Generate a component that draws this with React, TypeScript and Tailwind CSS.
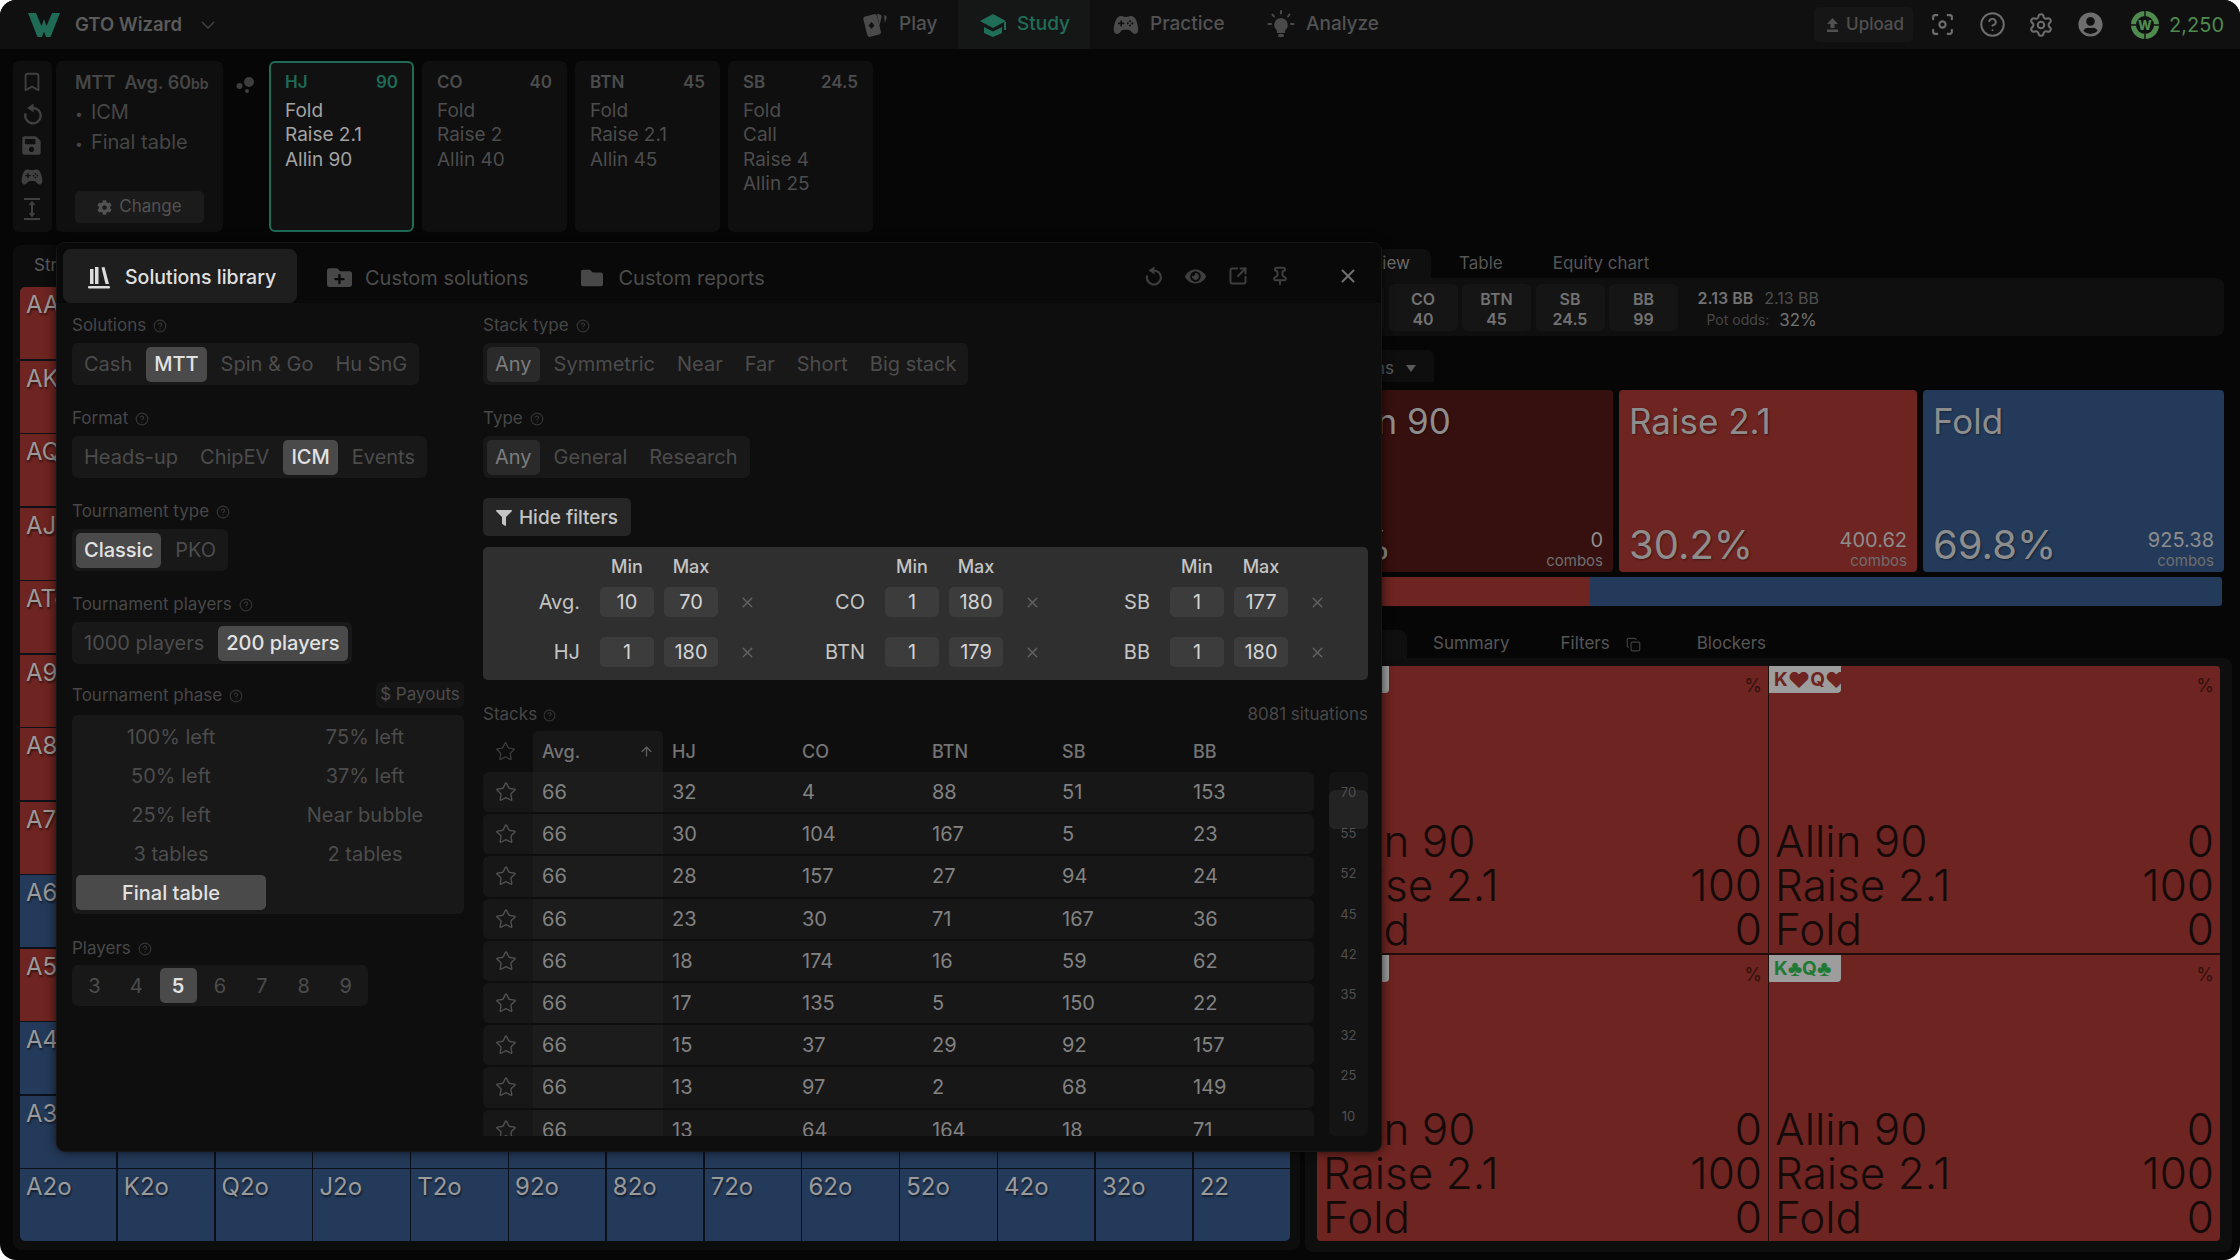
import { ArrowUp, Bookmark, CircleHelp, Copy, Focus, Pin, Settings, SquareArrowOutUpRight, Star, X } from "lucide-react";
import { FaCog, FaEye, FaFilter, FaFolder, FaFolderPlus, FaSave, FaUserCircle } from "react-icons/fa";
import { IoGameController } from "react-icons/io5";

const RANKS = ["A", "K", "Q", "J", "T", "9", "8", "7", "6", "5", "4", "3", "2"];
const RED_HANDS = ["AA", "AKo", "AQo", "AJo", "ATo", "A9o", "A8o", "A7o", "A5o"];

const SCENARIO = [
  { pos: "CO", stack: "40", lines: ["Fold", "Raise 2", "Allin 40"] },
  { pos: "BTN", stack: "45", lines: ["Fold", "Raise 2.1", "Allin 45"] },
  { pos: "SB", stack: "24.5", lines: ["Fold", "Call", "Raise 4", "Allin 25"] },
];

const FILTERS = [
  [
    { label: "Avg.", min: "10", max: "70" },
    { label: "HJ", min: "1", max: "180" },
  ],
  [
    { label: "CO", min: "1", max: "180" },
    { label: "BTN", min: "1", max: "179" },
  ],
  [
    { label: "SB", min: "1", max: "177" },
    { label: "BB", min: "1", max: "180" },
  ],
];

const STACKS = [
  [32, 4, 88, 51, 153],
  [30, 104, 167, 5, 23],
  [28, 157, 27, 94, 24],
  [23, 30, 71, 167, 36],
  [18, 174, 16, 59, 62],
  [17, 135, 5, 150, 22],
  [15, 37, 29, 92, 157],
  [13, 97, 2, 68, 149],
  [13, 64, 164, 18, 71],
];

const PHASES = ["100% left", "75% left", "50% left", "37% left", "25% left", "Near bubble", "3 tables", "2 tables", "Final table"];

function handLabel(row: number, col: number) {
  if (row === col) return RANKS[row] + RANKS[col];
  if (row < col) return RANKS[row] + RANKS[col] + "s";
  return RANKS[col] + RANKS[row] + "o";
}

function Logo() {
  return (
    <svg width="32" height="25" viewBox="0 0 32 25" className="shrink-0">
      <path d="M0 1H8L13.5 14 16 7 18.5 14 24 1H32L22.5 25H18L16 19.5 14 25H9.500Z" fill="#1f6b55" />
    </svg>
  );
}

function CardsIcon() {
  return (
    <svg width="27" height="28" viewBox="0 0 27 28" className="shrink-0">
      <rect x="3" y="4" width="14" height="21" rx="2.500" transform="rotate(-14 10 14)" fill="#4a4a4a" />
      <path d="M9.500 11l3 3.500-3 3.500-3-3.500z" fill="#101010" />
      <path d="M15 3l3 .5q2 .5 1.500 2.500l-2 9z" fill="#4a4a4a" />
      <path d="M22 4q3 .5 2.500 3l-1.500 5z" fill="#4a4a4a" />
    </svg>
  );
}

function StudyIcon() {
  return (
    <svg width="28" height="26" viewBox="0 0 28 26" className="shrink-0" fill="#216e58">
      <path d="M14 2 27 9 14 16 1 9Z" />
      <path d="M5 15v6l9 4 9-4v-6l-9 4.500Z" />
      <rect x="25" y="10" width="2" height="8" />
    </svg>
  );
}

function BulbIcon() {
  return (
    <svg width="28" height="30" viewBox="0 0 28 30" className="shrink-0" stroke="#4a4a4a" strokeWidth="2" strokeLinecap="round">
      <path d="M14 8a7 7 0 0 0-4 12.500V23h8v-2.500A7 7 0 0 0 14 8Z" fill="#4a4a4a" stroke="none" />
      <rect x="11" y="24" width="6" height="3" rx="1.500" fill="#4a4a4a" stroke="none" />
      <path d="M14 1v2.500M5.500 4.500 7 6.500M22.500 4.500 21 6.500M1.500 14H4M24 14h2.500" />
    </svg>
  );
}

function CursorIcon() {
  return (
    <svg width="18" height="22" viewBox="0 0 18 22" fill="none" stroke="#404040" strokeWidth="2">
      <path d="M1 1h16M1 21h16M9 5v12" />
      <path d="M6.500 7 9 4l2.500 3M6.500 15 9 18l2.500-3" strokeWidth="1.500" />
    </svg>
  );
}

function NodesIcon() {
  return (
    <svg width="20" height="20" viewBox="0 0 20 20" fill="#3e3e3e">
      <circle cx="13" cy="7" r="5" />
      <circle cx="3.500" cy="11" r="3" />
      <circle cx="11" cy="16" r="2" />
    </svg>
  );
}

function UploadIcon() {
  return (
    <svg width="11" height="14" viewBox="0 0 11 14" fill="#505050">
      <path d="M5.500 0 11 6H7.500v4h-4V6H0ZM0 11.500h11V14H0Z" />
    </svg>
  );
}

function RefreshIcon({ size }: { size: number }) {
  return (
    <svg width={size} height={size} viewBox="0 0 20 20" className="shrink-0">
      <path d="M11 4.500a7 7 0 1 1-6.800 5" fill="none" stroke="currentColor" strokeWidth="2.200" />
      <path d="M11.500 0.500v8L5.500 4.500Z" fill="currentColor" />
    </svg>
  );
}

function CoinIcon() {
  return (
    <svg width="28" height="28" viewBox="0 0 28 28" className="shrink-0">
      <circle cx="14" cy="14" r="14" fill="#4f8a4f" />
      <circle cx="14" cy="14" r="9" fill="#101010" />
      <text x="14" y="19" textAnchor="middle" fontSize="13" fontWeight="800" fill="#4f8a4f" fontFamily="Inter, sans-serif">
        W
      </text>
      <path d="M14 0v5M14 23v5M0 14h5M23 14h5" stroke="#101010" strokeWidth="1.500" />
    </svg>
  );
}

function BooksIcon() {
  return (
    <svg width="24" height="24" viewBox="0 0 24 24" fill="#dcdcdc" className="shrink-0">
      <rect x="3" y="3" width="3.500" height="15" />
      <rect x="8" y="1" width="3.500" height="17" />
      <path d="M14.500 1.500 17.500 1 22 18h-3.500Z" />
      <rect x="1" y="20" width="22" height="2.500" rx="1" />
    </svg>
  );
}

function TopBar() {
  return (
    <div className="flex h-[49px] items-center bg-[#101010]">
      <div className="flex w-[862px] items-center pl-[28px]">
        <Logo />
        <span className="ml-[15px] text-[18.500px] font-semibold text-[#5b5b5b]">GTO Wizard</span>
        <svg width="14" height="8" viewBox="0 0 14 8" fill="none" stroke="#404040" strokeWidth="1.500" className="ml-[19px]">
          <path d="M1 1l6 6 6-6" />
        </svg>
      </div>
      <div className="flex h-full items-center text-[19px] font-medium text-[#525252]">
        <div className="flex w-[96px] items-center gap-[10px]">
          <CardsIcon />
          Play
        </div>
        <div className="flex h-full w-[132px] items-center gap-[10px] bg-[#151717] pl-[21px] text-[#216e58]">
          <StudyIcon />
          Study
        </div>
        <div className="flex w-[177px] items-center gap-[11px] pl-[23px]">
          <IoGameController size={26} className="shrink-0 text-[#4a4a4a]" />
          Practice
        </div>
        <div className="flex items-center gap-[11px]">
          <BulbIcon />
          Analyze
        </div>
      </div>
      <div className="ml-auto flex items-center pr-[16px]">
        <div className="flex h-[35px] w-[99px] items-center gap-[8px] rounded-[5px] bg-[#161616] pl-[13px] text-[17px] font-medium text-[#505050]">
          <UploadIcon />
          Upload
        </div>
        <Focus size={25} className="ml-[17px] text-[#6e6e6e]" />
        <CircleHelp size={27} strokeWidth={1.7} className="ml-[24px] text-[#6e6e6e]" />
        <Settings size={26} strokeWidth={1.9} className="ml-[22px] text-[#6e6e6e]" />
        <FaUserCircle size={25} className="ml-[24px] text-[#6e6e6e]" />
        <div className="ml-[28px] flex items-center gap-[10px] text-[20px] text-[#4f8a4f]">
          <CoinIcon />
          2,250
        </div>
      </div>
    </div>
  );
}

function ScenarioRow() {
  return (
    <div className="mt-[12px] flex h-[171px] pl-[13px]">
      <div className="flex w-[39px] flex-col items-center gap-[10px] rounded-[6px] bg-[#0f0f0f] pr-[2px] pt-[10px] text-[#404040]">
        <Bookmark size={22} strokeWidth={2} />
        <RefreshIcon size={22} />
        <FaSave size={21} />
        <IoGameController size={22} />
        <CursorIcon />
      </div>
      <div className="ml-[4px] flex w-[167px] flex-col rounded-[6px] bg-[#0f0f0f] pl-[19px] pt-[11px]">
        <div className="text-[18px] font-semibold leading-[22px] text-[#464646]">
          MTT&nbsp; Avg. 60<span className="text-[14px]">bb</span>
        </div>
        <div className="mt-[3px] text-[20px] leading-[29px] text-[#464646]">
          <div>
            <span className="mr-[8px] text-[14px]">•</span>ICM
          </div>
          <div>
            <span className="mr-[8px] text-[14px]">•</span>Final table
          </div>
        </div>
        <div className="mb-[9px] mt-auto flex h-[32px] w-[129px] items-center justify-center gap-[7px] rounded-[5px] bg-[#1b1b1b] text-[17px] text-[#525252]">
          <FaCog size={15} />
          Change
        </div>
      </div>
      <div className="flex w-[46px] justify-center pt-[14px]">
        <NodesIcon />
      </div>
      <div className="w-[145px] rounded-[6px] border-2 border-[#1f6b55] bg-[#111111] px-[14px] pt-[7px] text-[19px] leading-[24.500px] text-[#a3a3a3]">
        <div className="mb-[4px] flex justify-between text-[17px] font-semibold text-[#1f6b55]">
          <span>HJ</span>
          <span>90</span>
        </div>
        <div>Fold</div>
        <div>Raise 2.1</div>
        <div>Allin 90</div>
      </div>
      {SCENARIO.map((card) => (
        <div key={card.pos} className="ml-[8px] w-[145px] rounded-[6px] bg-[#0f0f0f] px-[15px] pt-[9px] text-[19px] leading-[24.500px] text-[#4c4c4c]">
          <div className="mb-[4px] flex justify-between text-[17px] font-semibold">
            <span>{card.pos}</span>
            <span>{card.stack}</span>
          </div>
          {card.lines.map((line) => (
            <div key={line}>{line}</div>
          ))}
        </div>
      ))}
    </div>
  );
}

function HandGrid() {
  return (
    <div className="h-[1005px] w-[1287px] rounded-[8px] bg-[#0d0d0d] pl-[7px] pr-[10px]">
      <div className="flex h-[42px] items-center pl-[14px] text-[17px] text-[#5a5a5a]">Strategy</div>
      <div className="grid h-[954px] grid-cols-[repeat(13,minmax(0,1fr))] grid-rows-[repeat(13,minmax(0,1fr))] gap-[1.500px] overflow-hidden rounded-[5px] bg-[#0c1018]">
        {RANKS.map((_, row) =>
          RANKS.map((_, col) => {
            const hand = handLabel(row, col);
            // the library modal covers everything but the first column and the last row
            const visible = col === 0 || row === 12;
            return (
              <div
                key={hand}
                className={`pl-[6px] text-[24px] text-[#9a9a9a] [text-shadow:1px_2px_2px_rgba(0,0,0,0.5)] ${RED_HANDS.includes(hand) ? "bg-[#6e2420]" : "bg-[#243a5a]"}`}
              >
                {visible ? hand : null}
              </div>
            );
          }),
        )}
      </div>
    </div>
  );
}

function ActionCard({ title, pct, combos, bg, width }: { title: string; pct: string; combos: string; bg: string; width: string }) {
  return (
    <div className={`flex h-[182px] flex-col justify-between rounded-[4px] px-[10px] pb-[1px] pt-[9px] text-[#8d8d8d] ${bg} ${width}`}>
      <div className="text-[35px] leading-[44px] [text-shadow:1px_1px_2px_rgba(0,0,0,0.4)]">{title}</div>
      <div className="flex items-end justify-between">
        <span className="mb-[3px] text-[40px] leading-[46px] [text-shadow:1px_1px_2px_rgba(0,0,0,0.4)]">{pct}</span>
        <div className="text-right">
          <div className="text-[20px] leading-[22px]">{combos}</div>
          <div className="text-[15px] leading-[20px] text-[#6e6e6e]">combos</div>
        </div>
      </div>
    </div>
  );
}

function ComboCell({ first, second, suit, color }: { first: string; second: string; suit: string; color: string }) {
  return (
    <div className="flex flex-col justify-between bg-[#6e2420] pb-[2px] pr-[6px] text-[#140a0a]">
      <div className="flex items-start justify-between">
        <div className={`flex h-[27px] w-[72px] items-center rounded-br-[4px] bg-[#9d9d9d] pl-[5px] text-[19px] font-bold leading-none ${color}`}>
          {first}
          <span className="text-[22px]">{suit}</span>
          {second}
          <span className="text-[22px]">{suit}</span>
        </div>
        <span className="pt-[10px] text-[18px] leading-[20px] text-[#30110f]">%</span>
      </div>
      <div className="pl-[6px] text-[44px] font-light leading-[44px]">
        <div className="flex justify-between">
          <span>Allin 90</span>
          <span>0</span>
        </div>
        <div className="flex justify-between">
          <span>Raise 2.1</span>
          <span>100</span>
        </div>
        <div className="flex justify-between">
          <span>Fold</span>
          <span>0</span>
        </div>
      </div>
    </div>
  );
}

function RightPanel() {
  return (
    <div className="ml-[5px] flex w-[927px] flex-col">
      <div className="flex h-[33px] items-center pl-[15px] pt-[4px] text-[17px] text-[#565656]">
        <div className="flex h-full w-[111px] items-center justify-end rounded-t-[8px] bg-[#0f0f0f] pr-[21px] text-[#6a6a6a]">Overview</div>
        <span className="ml-[28px]">Table</span>
        <span className="ml-[50px]">Equity chart</span>
      </div>
      <div className="flex h-[58px] w-[919px] items-center rounded-[8px] bg-[#0f0f0f] pl-[10px] text-[16px] font-semibold text-[#727272]">
        {[
          ["", ""],
          ["CO", "40"],
          ["BTN", "45"],
          ["SB", "24.5"],
          ["BB", "99"],
        ].map(([pos, stack]) => (
          <div key={pos} className="mr-[4.500px] flex h-[47px] w-[69px] flex-col items-center justify-center rounded-[6px] bg-[#151515] pt-[3px] leading-[20px]">
            <span>{pos}</span>
            <span>{stack}</span>
          </div>
        ))}
        <div className="ml-[15px] pt-[4px]">
          <div className="flex gap-[11px] leading-[22px]">
            <span>2.13 BB</span>
            <span className="font-normal text-[#505050]">2.13 BB</span>
          </div>
          <div className="flex items-center pl-[9px] leading-[22px]">
            <span className="text-[14px] font-normal text-[#474747]">Pot odds:</span>
            <span className="ml-[10px] text-[17px] font-normal">32%</span>
          </div>
        </div>
      </div>
      <div className="mt-[14px] flex h-[32px] w-[129px] items-center justify-end gap-[12px] rounded-t-[6px] bg-[#0e0e0e] pr-[18px] pt-[5px] text-[17px] text-[#5a5a5a]">
        Actions
        <svg width="10" height="7" viewBox="0 0 10 7" fill="#5a5a5a">
          <path d="M0 0h10L5 7Z" />
        </svg>
      </div>
      <div className="mt-[8px] flex gap-[6px] pl-[12px]">
        <ActionCard title="Allin 90" pct="0%" combos="0" bg="bg-[#36100e]" width="w-[296px]" />
        <ActionCard title="Raise 2.1" pct="30.2%" combos="400.62" bg="bg-[#6e2420]" width="w-[298px]" />
        <ActionCard title="Fold" pct="69.8%" combos="925.38" bg="bg-[#243a5a]" width="w-[301px]" />
      </div>
      <div className="ml-[12px] mt-[5px] flex h-[29px] w-[905px] overflow-hidden rounded-[3px]">
        <div className="w-[273px] bg-[#6e2420]" />
        <div className="flex-1 bg-[#243a5a]" />
      </div>
      <div className="mt-[18px] flex h-[34px] items-center pl-[15px] pt-[6px] text-[17px] text-[#565656]">
        <div className="flex h-full w-[87px] items-center justify-end rounded-t-[8px] bg-[#0f0f0f]" />
        <span className="ml-[26px]">Summary</span>
        <span className="ml-[51px]">Filters</span>
        <Copy size={15} className="ml-[16px] text-[#3e3e3e]" />
        <span className="ml-[56px]">Blockers</span>
      </div>
      <div className="h-[594px] w-[927px] rounded-[8px] bg-[#0e0e0e] pl-[12px] pt-[8px]">
        <div className="grid h-[575px] w-[903px] grid-cols-2 grid-rows-2 gap-x-[1px] gap-y-[2px] overflow-hidden rounded-[4px] bg-[#200e0c]">
          <ComboCell first="K" second="Q" suit="♠" color="text-[#141414]" />
          <ComboCell first="K" second="Q" suit="♥" color="text-[#6e2420]" />
          <ComboCell first="K" second="Q" suit="♦" color="text-[#243a5a]" />
          <ComboCell first="K" second="Q" suit="♣" color="text-[#1f7a35]" />
        </div>
      </div>
    </div>
  );
}

function Label({ text }: { text: string }) {
  return (
    <div className="flex h-[22px] items-center pt-[2px] text-[17px] text-[#474747]">
      {text}
      <CircleHelp size={14} className="ml-[7px] text-[#343434]" />
    </div>
  );
}

function Segments({ items, active, dim }: { items: string[]; active: string; dim?: boolean }) {
  return (
    <div className="mt-[7px] flex h-[42px] w-fit items-center gap-[6px] rounded-[6px] bg-[#181818] px-[4px]">
      {items.map((item) => (
        <div
          key={item}
          className={`flex h-[35px] items-center rounded-[5px] px-[8px] text-[20px] ${
            item !== active ? "text-[#4c4c4c]" : dim ? "bg-[#2a2a2a] text-[#7c7c7c]" : "bg-[#4a4a4a] font-medium text-[#e2e2e2]"
          }`}
        >
          {item}
        </div>
      ))}
    </div>
  );
}

function FilterRow({ label, min, max }: { label: string; min: string; max: string }) {
  return (
    <div className="grid h-[30px] grid-cols-[107px_54px_54px_40px] gap-x-[10px]">
      <span className="flex items-center justify-end pr-[10px] text-[20px]">{label}</span>
      <span className="flex items-center justify-center rounded-[5px] bg-[#3c3c3c] text-[20px] text-[#d4d4d4]">{min}</span>
      <span className="flex items-center justify-center rounded-[5px] bg-[#3c3c3c] text-[20px] text-[#d4d4d4]">{max}</span>
      <span className="flex items-center pl-[11px]">
        <X size={17} className="text-[#626262]" />
      </span>
    </div>
  );
}

function FilterColumn({ rows }: { rows: { label: string; min: string; max: string }[] }) {
  return (
    <div className="flex w-[285px] flex-col text-[#c4c4c4]">
      <div className="grid h-[22px] grid-cols-[107px_54px_54px_40px] gap-x-[10px] pb-[6px] text-center text-[18px] font-medium leading-[16px]">
        <span />
        <span>Min</span>
        <span>Max</span>
      </div>
      <div className="mt-[6px]">
        <FilterRow {...rows[0]} />
      </div>
      <div className="mt-[20px]">
        <FilterRow {...rows[1]} />
      </div>
    </div>
  );
}

function LeftFilters() {
  return (
    <div className="w-[426px] pl-[15px] pt-[11px]">
      <Label text="Solutions" />
      <Segments items={["Cash", "MTT", "Spin & Go", "Hu SnG"]} active="MTT" />
      <div className="mt-[22px]">
        <Label text="Format" />
        <Segments items={["Heads-up", "ChipEV", "ICM", "Events"]} active="ICM" />
      </div>
      <div className="mt-[22px]">
        <Label text="Tournament type" />
        <Segments items={["Classic", "PKO"]} active="Classic" />
      </div>
      <div className="mt-[22px]">
        <Label text="Tournament players" />
        <Segments items={["1000 players", "200 players"]} active="200 players" />
      </div>
      <div className="mt-[18px] flex w-[392px] items-center justify-between">
        <Label text="Tournament phase" />
        <div className="flex h-[26px] w-[88px] items-center justify-center rounded-[5px] bg-[#151515] text-[17px] text-[#4c4c4c]">$ Payouts</div>
      </div>
      <div className="mt-[7px] grid w-[392px] grid-cols-2 gap-x-[4px] gap-y-[4px] rounded-[6px] bg-[#181818] p-[4px]">
        {PHASES.map((phase) => (
          <div
            key={phase}
            className={`flex h-[35px] items-center justify-center rounded-[5px] text-[20px] ${phase === "Final table" ? "bg-[#4a4a4a] font-medium text-[#e2e2e2]" : "text-[#4c4c4c]"}`}
          >
            {phase}
          </div>
        ))}
      </div>
      <div className="mt-[23px]">
        <Label text="Players" />
        <div className="mt-[6px] flex h-[41px] w-[296px] items-center gap-[5px] rounded-[6px] bg-[#181818] px-[4px]">
          {["3", "4", "5", "6", "7", "8", "9"].map((n) => (
            <div key={n} className={`flex h-[35px] w-[37px] items-center justify-center rounded-[5px] text-[20px] ${n === "5" ? "bg-[#4a4a4a] font-semibold text-[#e2e2e2]" : "text-[#4c4c4c]"}`}>
              {n}
            </div>
          ))}
        </div>
      </div>
    </div>
  );
}

function StacksTable() {
  return (
    <div className="mt-[24px]">
      <div className="flex h-[22px] items-center justify-between text-[17px] text-[#474747]">
        <span className="flex items-center">
          Stacks
          <CircleHelp size={13} className="ml-[6px] text-[#343434]" />
        </span>
        <span>8081 situations</span>
      </div>
      <div className="mt-[5px] grid h-[41px] w-[831px] grid-cols-[50px_130px_130px_130px_130px_131px_130px] items-center text-[18px] font-medium text-[#747474]">
        <Star size={21} strokeWidth={1.500} className="ml-[12px] text-[#3c3c3c]" />
        <div className="flex h-full items-center justify-between rounded-t-[5px] bg-[#171717] pl-[9px] pr-[9px]">
          Avg.
          <ArrowUp size={15} className="text-[#646464]" />
        </div>
        {["HJ", "CO", "BTN", "SB", "BB"].map((col) => (
          <span key={col} className="pl-[9px]">
            {col}
          </span>
        ))}
      </div>
      <div className="flex h-[364px] gap-[15px]">
        <div className="w-[831px] overflow-hidden">
          {STACKS.map((row, i) => (
            <div key={i} className="mb-[2px] grid h-[40.200px] grid-cols-[50px_130px_130px_130px_130px_131px_130px] items-center overflow-hidden rounded-[6px] bg-[#171717] text-[20px] text-[#828282]">
              <Star size={22} strokeWidth={1.500} className="ml-[12px] text-[#505050]" />
              <span className="flex h-full items-center bg-[#1c1c1c] pl-[9px]">66</span>
              {row.map((value, j) => (
                <span key={j} className="pl-[9px]">
                  {value}
                </span>
              ))}
            </div>
          ))}
        </div>
        <div className="relative w-[39px] rounded-[6px] bg-[#141414] pt-[1px]">
          <div className="absolute left-0 top-[18px] h-[39px] w-full rounded-[6px] bg-[#232323]" />
          {["70", "55", "52", "45", "42", "35", "32", "25", "10"].map((n) => (
            <div key={n} className="relative flex h-[40.400px] items-center justify-center text-[13px] text-[#505050]">
              {n}
            </div>
          ))}
        </div>
      </div>
    </div>
  );
}

function RightFilters() {
  return (
    <div className="w-[885px] pt-[11px]">
      <Label text="Stack type" />
      <Segments items={["Any", "Symmetric", "Near", "Far", "Short", "Big stack"]} active="Any" dim />
      <div className="mt-[22px]">
        <Label text="Type" />
        <Segments items={["Any", "General", "Research"]} active="Any" dim />
      </div>
      <div className="mt-[20px] flex h-[38px] w-[148px] items-center justify-center gap-[7px] rounded-[5px] bg-[#262626] pt-[2px] text-[19px] font-medium text-[#c4c4c4]">
        <FaFilter size={16} />
        Hide filters
      </div>
      <div className="mt-[11px] flex h-[133px] rounded-[5px] bg-[#2f2f2f] pt-[12px]">
        {FILTERS.map((rows) => (
          <FilterColumn key={rows[0].label} rows={rows} />
        ))}
      </div>
      <StacksTable />
    </div>
  );
}

function LibraryModal() {
  return (
    <div className="absolute left-[57px] top-[243px] h-[908px] w-[1324px] overflow-hidden rounded-[8px] bg-[#0e0e0e] shadow-[0_0_12px_rgba(0,0,0,0.8)] ring-1 ring-[#171717]">
      <div className="flex h-[60px] items-end bg-[#090909] pl-[6px] text-[20px] text-[#4c4c4c]">
        <div className="flex h-[54px] w-[234px] items-center gap-[14px] rounded-[8px] bg-[#1e1e1e] pl-[24px] pt-[3px] text-[19.500px] font-medium text-[#e0e0e0]">
          <BooksIcon />
          Solutions library
        </div>
        <div className="flex h-[54px] items-center pt-[3px]">
          <FaFolderPlus size={25} className="ml-[30px] text-[#484848]" />
          <span className="ml-[13px]">Custom solutions</span>
          <FaFolder size={22} className="ml-[53px] text-[#484848]" />
          <span className="ml-[15px]">Custom reports</span>
        </div>
        <div className="ml-auto flex h-[54px] items-center pr-[22px] text-[#3e3e3e]">
          <RefreshIcon size={20} />
          <FaEye size={21} className="ml-[22px]" />
          <SquareArrowOutUpRight size={20} strokeWidth={2.400} className="ml-[22px]" />
          <Pin size={20} strokeWidth={2.400} className="ml-[22px]" />
          <X size={22} strokeWidth={2.200} className="ml-[47px] text-[#707070]" />
        </div>
      </div>
      <div className="flex">
        <LeftFilters />
        <RightFilters />
      </div>
    </div>
  );
}

export default function App() {
  return (
    <div className="relative h-[1260px] w-[2240px] overflow-hidden rounded-[16px] bg-[#060606] [font-family:Inter,sans-serif]">
      <TopBar />
      <ScenarioRow />
      <div className="mt-[13px] flex pl-[13px]">
        <HandGrid />
        <RightPanel />
      </div>
      <LibraryModal />
    </div>
  );
}
